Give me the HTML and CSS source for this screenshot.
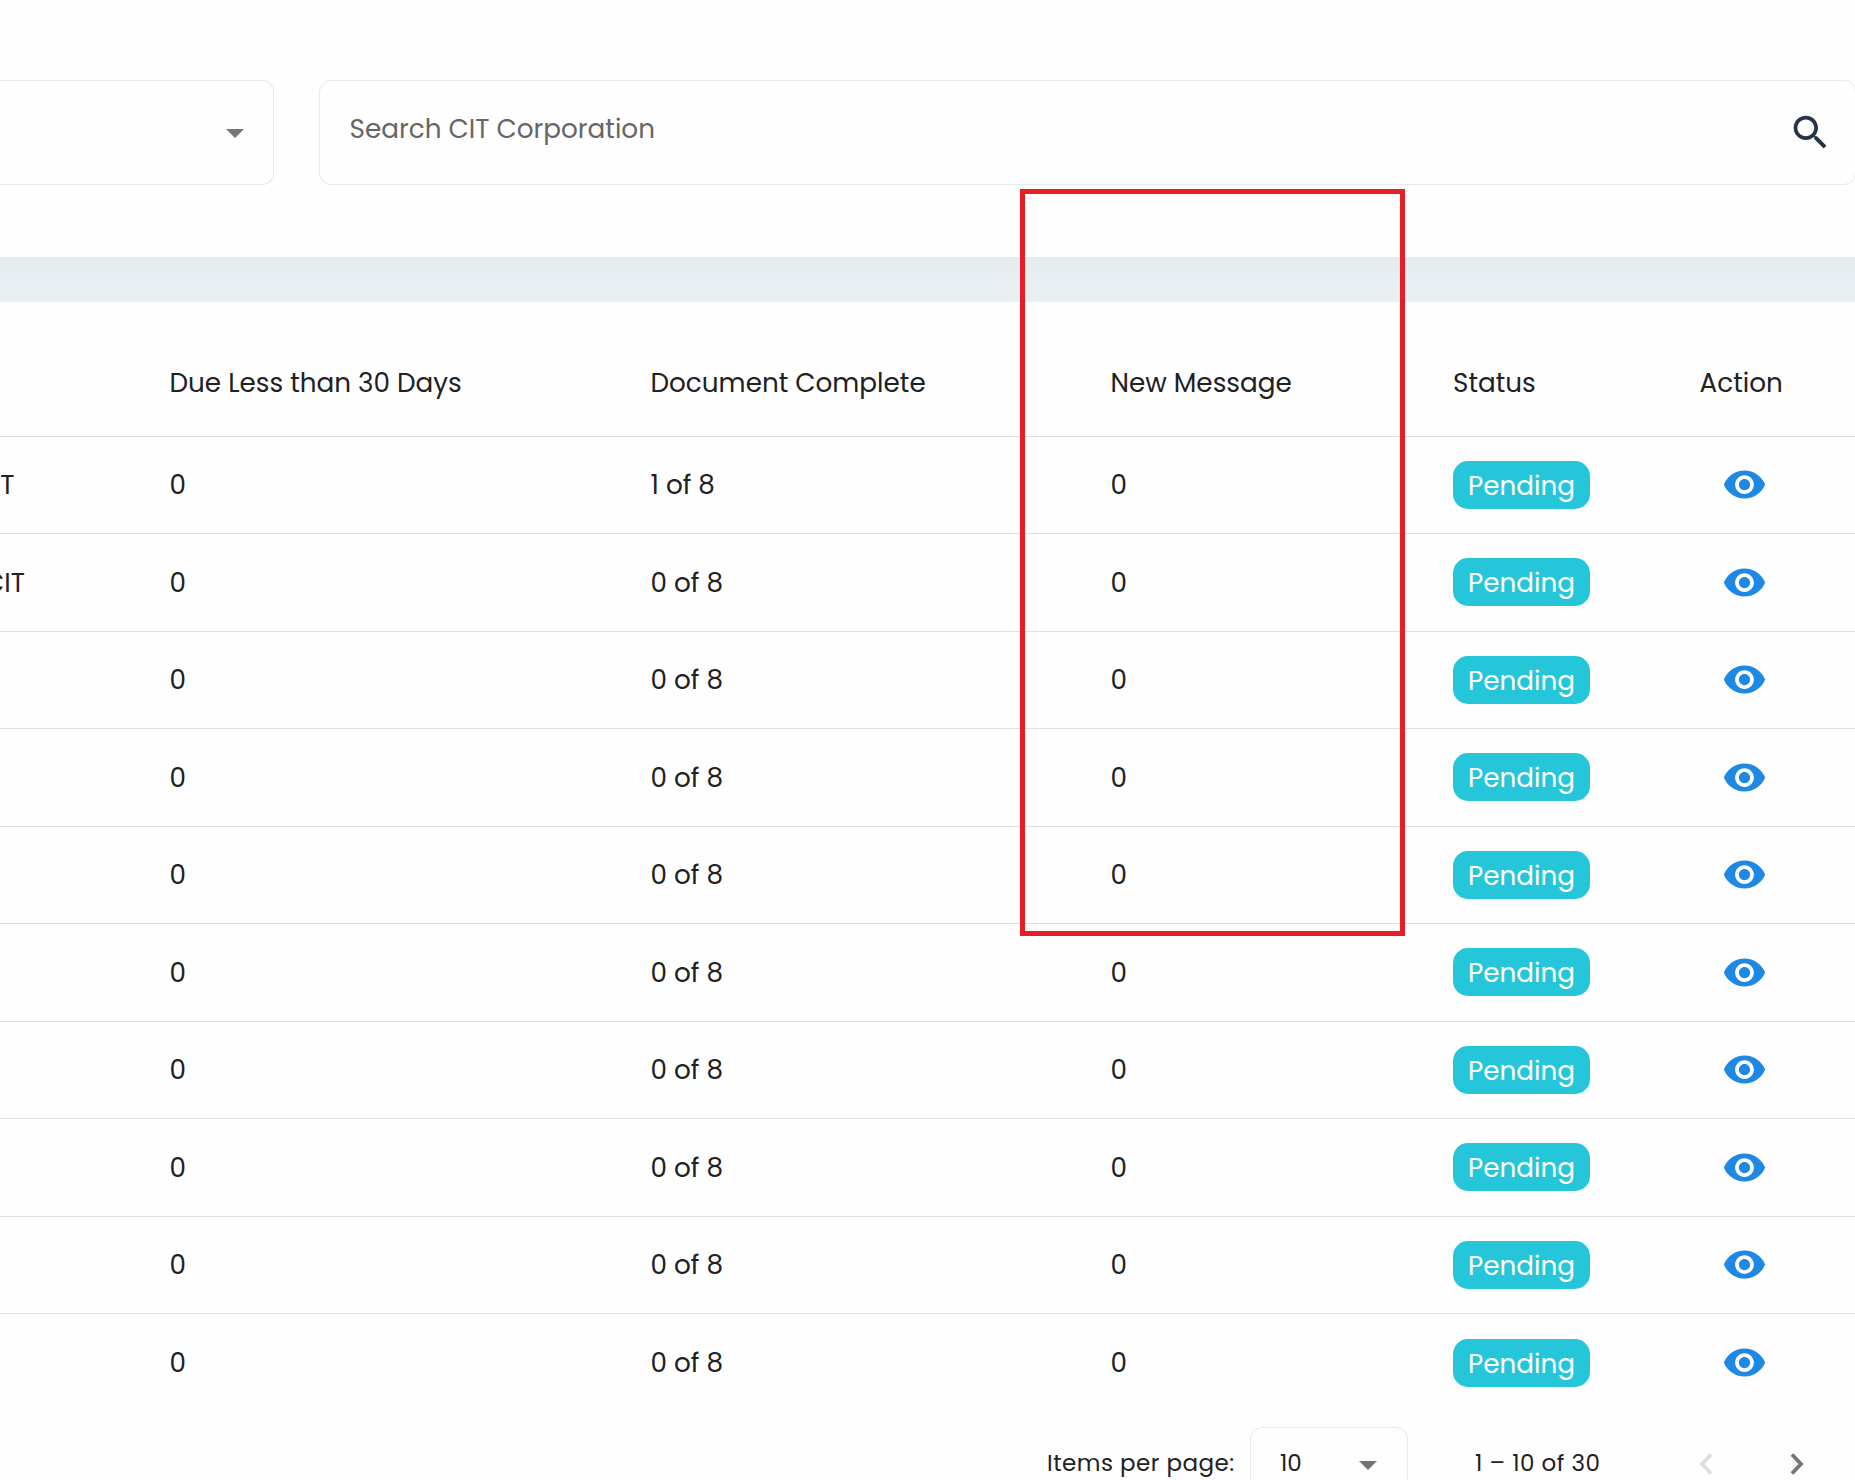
FILE: index.html
```html
<!DOCTYPE html>
<html lang="en">
<head>
<meta charset="utf-8">
<title>CIT Corporation</title>
<link rel="stylesheet" href="styles.css">
</head>
<body>
<svg class="defs" width="0" height="0">
  <symbol id="eye" viewBox="0 0 24 24"><path d="M12 4.5C7 4.5 2.73 7.61 1 12c1.73 4.39 6 7.5 11 7.5s9.27-3.11 11-7.5c-1.73-4.39-6-7.5-11-7.5zM12 17c-2.76 0-5-2.24-5-5s2.24-5 5-5 5 2.24 5 5-2.24 5-5 5zm0-8c-1.66 0-3 1.34-3 3s1.34 3 3 3 3-1.34 3-3-1.34-3-3-3z"/></symbol>
</svg>
<main class="page">
  <section class="filters">
    <div class="select"><i class="caret"></i></div>
    <div class="search">
      <span class="placeholder">Search CIT Corporation</span>
      <svg class="search-icon" viewBox="0 0 24 24"><path d="M15.5 14h-.79l-.28-.27C15.41 12.59 16 11.11 16 9.5 16 5.91 13.09 3 9.5 3S3 5.91 3 9.5 5.91 16 9.5 16c1.61 0 3.09-.59 4.23-1.57l.27.28v.79l5 4.99L20.49 19l-4.99-5zm-6 0C7.01 14 5 11.99 5 9.5S7.01 5 9.5 5 14 7.01 14 9.5 11.99 14 9.5 14z"/></svg>
    </div>
  </section>
  <div class="band"></div>
  <section class="table">
    <div class="row head"><span></span><span>Due Less than 30 Days</span><span>Document Complete</span><span>New Message</span><span>Status</span><span>Action</span></div>
    <div class="row"><span class="name short">T</span><span>0</span><span>1 of 8</span><span>0</span><span><b class="pill">Pending</b></span><svg class="eye"><use href="#eye"/></svg></div>
    <div class="row"><span class="name">CIT</span><span>0</span><span>0 of 8</span><span>0</span><span><b class="pill">Pending</b></span><svg class="eye"><use href="#eye"/></svg></div>
    <div class="row"><span></span><span>0</span><span>0 of 8</span><span>0</span><span><b class="pill">Pending</b></span><svg class="eye"><use href="#eye"/></svg></div>
    <div class="row"><span></span><span>0</span><span>0 of 8</span><span>0</span><span><b class="pill">Pending</b></span><svg class="eye"><use href="#eye"/></svg></div>
    <div class="row"><span></span><span>0</span><span>0 of 8</span><span>0</span><span><b class="pill">Pending</b></span><svg class="eye"><use href="#eye"/></svg></div>
    <div class="row"><span></span><span>0</span><span>0 of 8</span><span>0</span><span><b class="pill">Pending</b></span><svg class="eye"><use href="#eye"/></svg></div>
    <div class="row"><span></span><span>0</span><span>0 of 8</span><span>0</span><span><b class="pill">Pending</b></span><svg class="eye"><use href="#eye"/></svg></div>
    <div class="row"><span></span><span>0</span><span>0 of 8</span><span>0</span><span><b class="pill">Pending</b></span><svg class="eye"><use href="#eye"/></svg></div>
    <div class="row"><span></span><span>0</span><span>0 of 8</span><span>0</span><span><b class="pill">Pending</b></span><svg class="eye"><use href="#eye"/></svg></div>
    <div class="row last"><span></span><span>0</span><span>0 of 8</span><span>0</span><span><b class="pill">Pending</b></span><svg class="eye"><use href="#eye"/></svg></div>
  </section>
  <footer class="paginator">
    <span class="label">Items per page:</span>
    <div class="page-size"><span class="size">10</span><i class="caret"></i></div>
    <span class="range">1 – 10 of 30</span>
    <svg class="chevron prev" viewBox="0 0 14 22"><path d="M12 1.500 3 11l9 9.500"/></svg>
    <svg class="chevron next" viewBox="0 0 14 22"><path d="M2 1.500 11 11l-9 9.500"/></svg>
  </footer>
  <div class="highlight"></div>
</main>
</body>
</html>
```

FILE: styles.css
```css
* { box-sizing: border-box; }
body { margin: 0; background: #fefefe; }
.defs { display: block; }
.page {
  position: relative;
  width: 1855px;
  height: 1480px;
  overflow: hidden;
  font-family: Poppins, Inter, "Open Sans", sans-serif;
  font-size: 26.25px;
  color: #212121;
  white-space: nowrap;
}
.filters { display: flex; gap: 45px; height: 257px; padding-top: 80px; }
.select, .search {
  display: flex;
  flex: none;
  align-items: center;
  height: 105px;
  border: 1px solid #e5eaea;
}
.select {
  width: 274px;
  border-left: 0;
  border-radius: 0 12px 12px 0;
  justify-content: flex-end;
  padding-right: 29px;
}
.search {
  width: 1537px;
  border-radius: 12px;
  justify-content: space-between;
  padding: 0 22px 0 29.5px;
}
.placeholder { color: #666; padding-bottom: 8px; }
.search-icon { width: 45px; height: 45px; fill: #263445; }
.caret {
  border: 9.5px solid transparent;
  border-top-color: #757575;
  border-bottom: 0;
  margin-top: 2.5px;
}
.band { height: 45px; background: linear-gradient(#e6ebed, #e5edf0 25%, #e9f0f3 70%); }
.row {
  display: grid;
  grid-template-columns: 169.5px 481px 460px 342.5px 246.5px 1fr;
  align-items: center;
  height: 97.5px;
  padding-top: 0.5px;
  border-bottom: 1px solid #dedfe0;
}
.head { height: 134.8px; padding-top: 28px; }
.last { border-bottom-color: transparent; }
.last .pill { margin-top: 0; }
.name {
  display: flex;
  justify-content: flex-end;
  width: 25px;
  overflow: hidden;
}
.short { width: 14.5px; }
.pill {
  display: flex;
  align-items: center;
  justify-content: center;
  width: 137px;
  height: 48px;
  margin-top: -1px;
  padding: 2px 0 0;
  border-radius: 15px;
  background: #26c6da;
  color: #fff;
  font-weight: 400;
}
.eye { width: 45px; height: 45px; margin: -1.5px 0 0 22px; fill: #1e88e5; }
.paginator {
  display: flex;
  align-items: center;
  height: 74px;
  margin-top: 15px;
  padding-left: 1046px;
  font-size: 23px;
}
.label { width: 204px; padding: 0 0 2px 1px; letter-spacing: 0.48px; }
.page-size {
  display: flex;
  align-items: center;
  justify-content: space-between;
  width: 158px;
  height: 74px;
  padding: 0 30px 0 29px;
  border: 1px solid #e5e9ea;
  border-radius: 12px;
}
.size { padding-bottom: 2px; }
.range { width: 223px; margin-left: 67px; padding-bottom: 2px; letter-spacing: 0.48px; }
.chevron { width: 14px; height: 22px; fill: none; stroke: #757575; stroke-width: 3.8; }
.prev { margin-left: 1px; stroke: #dedede; }
.next { margin-left: 77px; }
.highlight {
  position: absolute;
  left: 1020px;
  top: 189px;
  width: 385px;
  height: 747px;
  border: 5px solid #e61e28;
}
```
